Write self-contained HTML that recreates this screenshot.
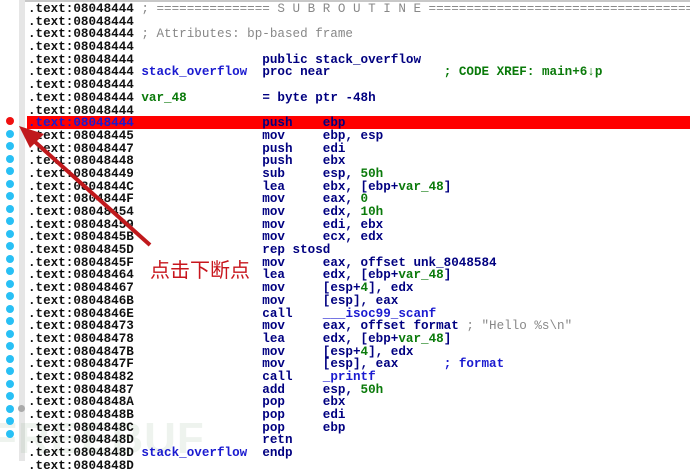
<!DOCTYPE html>
<html><head><meta charset="utf-8"><style>
body{margin:0;width:690px;height:461px;overflow:hidden;background:#fff;position:relative;font-family:"Liberation Mono",monospace}
.gut{position:absolute;left:19px;top:0;width:6px;height:461px;background:#e6e6e6}
.top{position:absolute;left:25px;top:0;width:665px;height:2px;background:#c8c8c8}
.bar{position:absolute;left:27px;top:116px;width:663px;height:13px;background:#ff0000}
pre{position:absolute;left:28px;top:3px;margin:0;font-family:"Liberation Mono",monospace;font-size:12.6px;line-height:12.68px;font-weight:bold;color:#111}
.n{color:#000080}.g{color:#0a7a0a}.c{color:#888;font-weight:normal}.b{color:#1a1ad0}.k{color:#1a1ad0}
.dot{position:absolute;left:6px;width:8px;height:8px;border-radius:50%;background:#28c0f5}
.wm{position:absolute;left:-10px;top:414px;font:bold 44px "Liberation Sans",sans-serif;color:rgba(150,180,150,0.16);letter-spacing:1px}
.cn{position:absolute;left:150px;top:254px;font-size:20px;color:#c8161d;font-family:"Liberation Sans","Noto Sans CJK SC",sans-serif}
</style></head><body>
<div class="gut"></div><div class="top"></div><div class="bar"></div>
<div class="wm">FREEBUF</div>
<pre>.text:08048444 <span class="c">; =============== S U B R O U T I N E =======================================</span>
.text:08048444
.text:08048444 <span class="c">; Attributes: bp-based frame</span>
.text:08048444
.text:08048444                 <span class="n">public stack_overflow</span>
.text:08048444 <span class="b">stack_overflow</span>  <span class="n">proc near</span>               <span class="g">; CODE XREF: main+6↓p</span>
.text:08048444
.text:08048444 <span class="g">var_48</span>          <span class="n">= byte ptr -48h</span>
.text:08048444
<span class="b">.text:08048444</span>                 <span class="n">push    ebp</span>
.text:08048445                 <span class="n">mov     ebp, esp</span>
.text:08048447                 <span class="n">push    edi</span>
.text:08048448                 <span class="n">push    ebx</span>
.text:08048449                 <span class="n">sub     esp, <span class="g">50h</span></span>
.text:0804844C                 <span class="n">lea     ebx, [ebp+<span class="g">var_48</span>]</span>
.text:0804844F                 <span class="n">mov     eax, <span class="g">0</span></span>
.text:08048454                 <span class="n">mov     edx, <span class="g">10h</span></span>
.text:08048459                 <span class="n">mov     edi, ebx</span>
.text:0804845B                 <span class="n">mov     ecx, edx</span>
.text:0804845D                 <span class="n">rep stosd</span>
.text:0804845F                 <span class="n">mov     eax, offset unk_8048584</span>
.text:08048464                 <span class="n">lea     edx, [ebp+<span class="g">var_48</span>]</span>
.text:08048467                 <span class="n">mov     [esp+<span class="g">4</span>], edx</span>
.text:0804846B                 <span class="n">mov     [esp], eax</span>
.text:0804846E                 <span class="n">call    <span class="k">___isoc99_scanf</span></span>
.text:08048473                 <span class="n">mov     eax, offset format</span> <span class="c">; "Hello %s\n"</span>
.text:08048478                 <span class="n">lea     edx, [ebp+<span class="g">var_48</span>]</span>
.text:0804847B                 <span class="n">mov     [esp+<span class="g">4</span>], edx</span>
.text:0804847F                 <span class="n">mov     [esp], eax</span>      <span class="k">; format</span>
.text:08048482                 <span class="n">call    <span class="k">_printf</span></span>
.text:08048487                 <span class="n">add     esp, <span class="g">50h</span></span>
.text:0804848A                 <span class="n">pop     ebx</span>
.text:0804848B                 <span class="n">pop     edi</span>
.text:0804848C                 <span class="n">pop     ebp</span>
.text:0804848D                 <span class="n">retn</span>
.text:0804848D <span class="b">stack_overflow</span>  <span class="n">endp</span>
.text:0804848D</pre>
<div class="dot" style="top:117px;background:#f01010"></div>
<div class="dot" style="top:129.5px"></div><div class="dot" style="top:142px"></div><div class="dot" style="top:154.5px"></div><div class="dot" style="top:167px"></div><div class="dot" style="top:179.5px"></div><div class="dot" style="top:192px"></div><div class="dot" style="top:204.5px"></div><div class="dot" style="top:217px"></div><div class="dot" style="top:229.5px"></div><div class="dot" style="top:242px"></div><div class="dot" style="top:254.5px"></div><div class="dot" style="top:267px"></div><div class="dot" style="top:279.5px"></div><div class="dot" style="top:292px"></div><div class="dot" style="top:304.5px"></div><div class="dot" style="top:317px"></div><div class="dot" style="top:329.5px"></div><div class="dot" style="top:342px"></div><div class="dot" style="top:354.5px"></div><div class="dot" style="top:367px"></div><div class="dot" style="top:379.5px"></div><div class="dot" style="top:392px"></div><div class="dot" style="top:404.5px"></div><div class="dot" style="top:417px"></div><div class="dot" style="top:429.5px"></div>
<div style="position:absolute;left:18px;top:405px;width:7px;height:7px;border-radius:50%;background:#aaa"></div>
<svg style="position:absolute;left:0;top:0" width="690" height="461"><line x1="150" y1="245" x2="34" y2="141" stroke="#c0191c" stroke-width="4"/><polygon points="19,126 44,134 30,148" fill="#c0191c"/></svg>
<div class="cn">点击下断点</div>
</body></html>
